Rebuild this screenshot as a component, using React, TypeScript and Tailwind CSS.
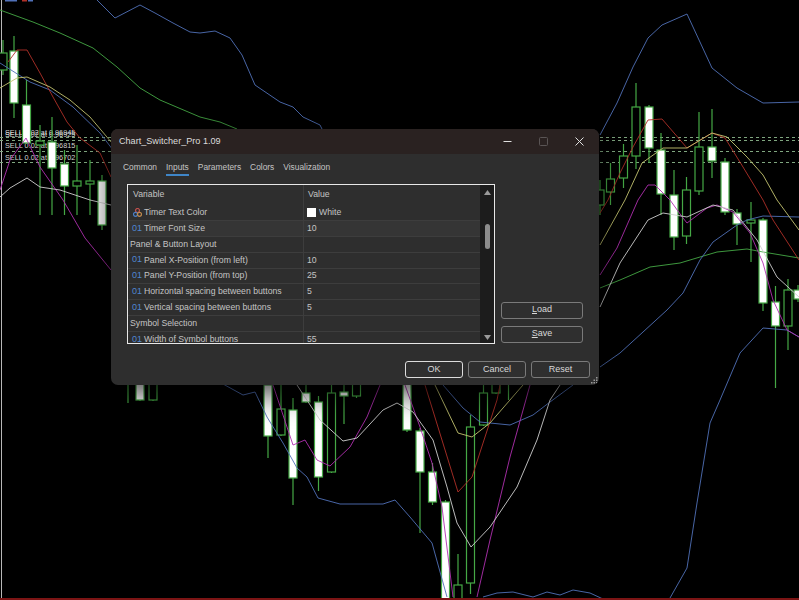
import React from "react";

// x, body top, body bottom, wick top, wick bottom, filled
const candles: [number, number, number, number, number, boolean][] = [
  [3, 53, 70, 40, 75, false],
  [14, 51, 103, 36, 118, true],
  [26.5, 105, 143, 80, 143, true],
  [40, 141, 145, 125, 215, false],
  [52, 142, 168, 117, 215, true],
  [64.5, 164, 186, 150, 215, true],
  [77, 181, 186, 145, 215, false],
  [90, 181, 184, 160, 215, false],
  [102, 181, 225, 175, 230, true],
  [128, 340, 375, 330, 403, false],
  [140, 340, 400, 330, 401, true],
  [153, 340, 400, 330, 401, false],
  [268, 385, 436, 380, 458, true],
  [281, 409, 435, 385, 436, false],
  [293, 410, 478, 398, 505, true],
  [306, 393, 402, 380, 403, true],
  [318.5, 402, 477, 396, 491, true],
  [331.5, 393, 472, 385, 473, false],
  [344, 392, 396, 385, 424, true],
  [356.5, 375, 396, 375, 398, false],
  [407, 375, 430, 375, 432, true],
  [420, 431, 472, 428, 533, true],
  [432.5, 472, 502, 463, 505, true],
  [445.5, 502, 600, 500, 600, true],
  [458, 585, 600, 554, 600, false],
  [470.5, 427, 583, 415, 594, false],
  [483.5, 393, 425, 375, 426, false],
  [496, 375, 393, 375, 394, false],
  [508.5, 385, 385, 375, 400, false],
  [600, 190, 205, 180, 215, false],
  [610.5, 179, 192, 163, 205, false],
  [623.5, 156, 178, 144, 188, false],
  [636, 107, 156, 83, 169, false],
  [649, 107, 148, 105, 163, true],
  [661, 150, 194, 133, 215, true],
  [674, 195, 237, 170, 250, true],
  [686.5, 190, 236, 177, 244, false],
  [699, 147, 191, 112, 195, false],
  [712, 147, 161, 109, 178, true],
  [725, 162, 212, 158, 215, true],
  [737, 213, 224, 209, 245, true],
  [751, 220, 223, 202, 262, false],
  [763, 220, 303, 218, 311, true],
  [775.5, 302, 326, 286, 388, true],
  [788, 290, 326, 279, 350, false],
  [798, 290, 299, 285, 302, true],
];

const green = "#45a845";
const blue = "#5070b8";
const red = "#b03028";
const yellow = "#c4c470";
const purple = "#b030b0";
const white = "#cfcfcf";

const lines: { color: string; points: string }[] = [
  { color: green, points: "0,10 33,22 60,33 93,48 117,67 140,88 160,100 200,117 220,122 237,129" },
  { color: green, points: "600,288 620,280 650,267 680,263 700,257 717,252 747,249 763,252 799,258" },
  { color: blue, points: "97,0 115,18 140,5 155,13 173,23 190,32 200,33 215,31 230,38 242,55 255,85 280,102 293,107 303,117 320,125 322,129" },
  { color: blue, points: "600,135 617,103 633,67 648,38 662,25 687,14 712,68 737,88 763,103 799,102" },
  { color: blue, points: "0,63 30,82 50,90 73,107 100,133 113,150" },
  { color: blue, points: "200,384 223,384 243,395 255,392 267,417 283,443 297,468 307,477 318,498 340,504 383,504 395,500 410,517 432,543 447,597" },
  { color: blue, points: "483,597 497,593 513,592 533,597 547,592 560,595 573,590 590,593 603,599" },
  { color: blue, points: "670,598 687,568 697,503 710,423 720,400 740,353 763,328 787,330 799,337" },
  { color: blue, points: "443,385 463,408 480,422 510,425 533,415 550,402 573,385" },
  { color: blue, points: "600,367 620,353 643,332 667,310 683,293 700,260 713,242 737,225 747,220 763,216 799,217" },
  { color: red, points: "8,62 17,50 27,50 40,73 53,97 67,122 80,138 100,153 111,177" },
  { color: red, points: "600,213 608,200 620,173 633,147 648,120 662,119 687,148 712,133 725,138 743,167 763,200 773,220 799,260" },
  { color: red, points: "425,385 458,492 472,477 497,400 500,385" },
  { color: yellow, points: "0,88 17,78 27,77 50,87 70,100 90,117 112,143" },
  { color: yellow, points: "435,385 458,433 472,437 490,423 523,385" },
  { color: yellow, points: "600,245 625,200 642,163 663,148 687,148 712,133 727,137 747,157 763,175 777,200 799,230" },
  { color: purple, points: "0,190 10,160 26,138 40,167 63,200 85,238 111,270" },
  { color: purple, points: "273,385 293,445 305,440 317,460 330,466 350,447 367,417 380,385" },
  { color: purple, points: "405,385 420,427 432,463 442,507 453,597" },
  { color: purple, points: "477,597 490,540 510,457 530,385" },
  { color: purple, points: "600,275 617,248 638,200 648,185 655,185 670,200 683,218 687,223 707,208 717,205 733,212 750,233 763,263 773,300 787,330 799,337" },
  { color: white, points: "0,197 10,188 27,178 40,187 60,190 90,200 111,205" },
  { color: white, points: "297,385 320,420 343,441 357,438 383,410 397,403 413,412 433,440 447,487 457,523 471,547 490,527 517,487 537,440 550,400 560,385" },
  { color: white, points: "600,307 620,263 648,220 663,213 687,217 713,205 733,210 757,240 777,277 799,297" },
];

function Chart() {
  return (
    <svg className="absolute inset-0" width={799} height={600} viewBox="0 0 799 600" fill="none">
      <line x1={1.5} y1={0} x2={1.5} y2={600} stroke="#b8b8b8" strokeWidth={1} />
      <rect x={5} y={0} width={12} height={1.5} fill={blue} />
      <rect x={22} y={0} width={5} height={1.5} fill={red} />
      <rect x={28} y={0} width={5} height={1.5} fill={blue} />
      {[137.5, 140.5, 151.5, 162.5].map((y) => (
        <line key={y} x1={0} y1={y} x2={799} y2={y} stroke="#7fa67f" strokeWidth={1} strokeDasharray="3 3" />
      ))}
      {candles.map(([x, top, bottom, wickTop, wickBottom, filled], i) => (
        <g key={i}>
          <line x1={x} y1={wickTop} x2={x} y2={wickBottom} stroke={green} strokeWidth={1.2} />
          <rect
            x={x - 4}
            y={top}
            width={8}
            height={bottom - top}
            fill={filled ? "#ffffff" : "#000000"}
            stroke={green}
            strokeWidth={1.2}
          />
        </g>
      ))}
      {lines.map((l, i) => (
        <polyline key={i} points={l.points} stroke={l.color} strokeWidth={0.9} strokeLinejoin="round" />
      ))}
      <rect x={0} y={598} width={799} height={2} fill="#7c1414" />
    </svg>
  );
}

const sellLabels = [
  { text: "SELL 0.02 at 0.96945", cls: "top-[128px]" },
  { text: "SELL 0.02 at 0.96925", cls: "top-[130px]" },
  { text: "SELL 0.02 at 0.96815", cls: "top-[141px]" },
  { text: "SELL 0.02 at 0.96702", cls: "top-[153px]" },
];

const rows = [
  { kind: "color", name: "Timer Text Color", value: "White" },
  { kind: "num", name: "Timer Font Size", value: "10", light: true },
  { kind: "group", name: "Panel & Button Layout", value: "" },
  { kind: "num", name: "Panel X-Position (from left)", value: "10" },
  { kind: "num", name: "Panel Y-Position (from top)", value: "25" },
  { kind: "num", name: "Horizontal spacing between buttons", value: "5" },
  { kind: "num", name: "Vertical spacing between buttons", value: "5" },
  { kind: "group", name: "Symbol Selection", value: "" },
  { kind: "num", name: "Width of Symbol buttons", value: "55" },
];

function ColorIcon() {
  return (
    <svg width={9} height={9} viewBox="0 0 9 9" className="shrink-0">
      <circle cx={4.5} cy={2.5} r={2} fill="none" stroke="#c0504d" strokeWidth={1.2} />
      <circle cx={2.5} cy={6.3} r={2} fill="none" stroke="#4a7fc8" strokeWidth={1.2} />
      <circle cx={6.5} cy={6.3} r={2} fill="none" stroke="#c08a4d" strokeWidth={1.2} />
    </svg>
  );
}

function Row({ row }: { row: (typeof rows)[number] }) {
  return (
    <div className={`grid grid-cols-[176px_1fr] h-[15.9px] shrink-0 border-b border-[#3d3d3d] ${row.light ? "bg-[#353535]" : "bg-[#2e2e2e]"}`}>
      <div className="flex items-center border-r border-[#3d3d3d] pl-[2px] min-w-0 whitespace-nowrap">
        {row.kind === "group" ? (
          <span>{row.name}</span>
        ) : (
          <>
            <span className="w-[14px] flex justify-center shrink-0">
              {row.kind === "color" ? <ColorIcon /> : <span className="text-[#4f86d0] text-[9px]">01</span>}
            </span>
            <span>{row.name}</span>
          </>
        )}
      </div>
      <div className="flex items-center pl-[3px]">
        {row.kind === "color" && <span className="w-[9px] h-[9px] bg-white mr-[3px]" />}
        {row.value}
      </div>
    </div>
  );
}

function Btn({ label, u, primary, cls }: { label: string; u?: boolean; primary?: boolean; cls: string }) {
  return (
    <button
      className={`${cls} h-[17px] rounded-[3px] border flex items-center justify-center bg-[#2f2f2f] text-[#d8d8d8] text-[9px] ${primary ? "border-[#dcdcdc]" : "border-[#7a7a7a]"}`}
    >
      {u ? (
        <>
          <span className="underline">{label[0]}</span>
          {label.slice(1)}
        </>
      ) : (
        label
      )}
    </button>
  );
}

function Dialog() {
  return (
    <div className="absolute left-[111px] top-[129px] w-[488px] h-[256px] rounded-[7px] overflow-hidden flex flex-col bg-[#2e2e2e] text-[#c4c4c4] text-[8.7px] font-['Liberation_Sans',sans-serif]">
      <div className="h-[25px] shrink-0 flex items-center justify-between bg-[#2a2221] pl-[8px]">
        <span className="text-[#dcdcdc] text-[9.1px]">Chart_Switcher_Pro 1.09</span>
        <div className="flex items-center pr-[15px] gap-[27px]">
          <svg width={9} height={9} viewBox="0 0 9 9">
            <line x1={0.5} y1={4.5} x2={8.5} y2={4.5} stroke="#e0e0e0" strokeWidth={1} />
          </svg>
          <svg width={9} height={9} viewBox="0 0 9 9">
            <rect x={0.5} y={0.5} width={8} height={8} rx={1} fill="none" stroke="#5a5555" strokeWidth={1} />
          </svg>
          <svg width={9} height={9} viewBox="0 0 9 9">
            <path d="M0.5 0.5L8.5 8.5M8.5 0.5L0.5 8.5" stroke="#e0e0e0" strokeWidth={1} />
          </svg>
        </div>
      </div>

      <div className="flex h-[21px] shrink-0 items-start gap-[9px] pl-[12px] pt-[7px] text-[8.4px]">
        <span>Common</span>
        <span className="relative">
          Inputs
          <span className="absolute left-0 right-0 top-[13px] h-[1.5px] bg-[#3f86c8]" />
        </span>
        <span>Parameters</span>
        <span>Colors</span>
        <span>Visualization</span>
      </div>

      <div className="flex gap-[6px] pl-[16px] h-[160px] shrink-0 mt-[9px]">
        <div className="w-[368px] h-full border border-[#e8e8e8] flex overflow-hidden">
          <div className="flex-1 min-w-0 flex flex-col overflow-hidden">
            <div className="grid grid-cols-[176px_1fr] h-[20px] shrink-0">
              <div className="border-r border-[#3d3d3d] pl-[5px] flex items-center">Variable</div>
              <div className="pl-[4px] flex items-center">Value</div>
            </div>
            {rows.map((r) => (
              <Row key={r.name} row={r} />
            ))}
          </div>
          <div className="w-[14px] shrink-0 bg-[#1c1c1c] flex flex-col items-center relative">
            <svg width={7} height={5} viewBox="0 0 7 5" className="mt-[5px]">
              <path d="M3.5 0L7 5H0Z" fill="#9a9a9a" />
            </svg>
            <div className="w-[5px] h-[25px] rounded-full bg-[#8c8c8c] mt-[29px]" />
            <svg width={7} height={5} viewBox="0 0 7 5" className="mt-auto mb-[3px]">
              <path d="M3.5 5L7 0H0Z" fill="#9a9a9a" />
            </svg>
          </div>
        </div>
        <div className="flex flex-col justify-end gap-[7px] pb-[1.5px]">
          <Btn label="Load" u cls="w-[82px]" />
          <Btn label="Save" u cls="w-[82px]" />
        </div>
      </div>

      <div className="flex justify-end gap-[5px] pr-[9px] mt-[17px]">
        <Btn label="OK" primary cls="w-[58px]" />
        <Btn label="Cancel" cls="w-[58px]" />
        <Btn label="Reset" cls="w-[59px]" />
      </div>

      <svg width={7} height={7} viewBox="0 0 7 7" className="absolute right-[1px] bottom-[1px]">
        <g fill="#9a9a9a">
          <rect x={5} y={0} width={1.5} height={1.5} />
          <rect x={2.5} y={2.5} width={1.5} height={1.5} />
          <rect x={5} y={2.5} width={1.5} height={1.5} />
          <rect x={0} y={5} width={1.5} height={1.5} />
          <rect x={2.5} y={5} width={1.5} height={1.5} />
          <rect x={5} y={5} width={1.5} height={1.5} />
        </g>
      </svg>
    </div>
  );
}

export default function App() {
  return (
    <div className="relative w-[799px] h-[600px] bg-black overflow-hidden">
      {sellLabels.map((s) => (
        <span key={s.text} className={`absolute left-[5px] ${s.cls} text-[7.3px] leading-[10px] text-[#d0d0d0] whitespace-nowrap font-['Liberation_Sans',sans-serif]`}>
          {s.text}
        </span>
      ))}
      <Chart />
      <div className="absolute left-[111px] top-[129px] w-[488px] h-[256px] rounded-[7px] shadow-[0_8px_30px_rgba(0,0,0,0.75)]" />
      <Dialog />
    </div>
  );
}
